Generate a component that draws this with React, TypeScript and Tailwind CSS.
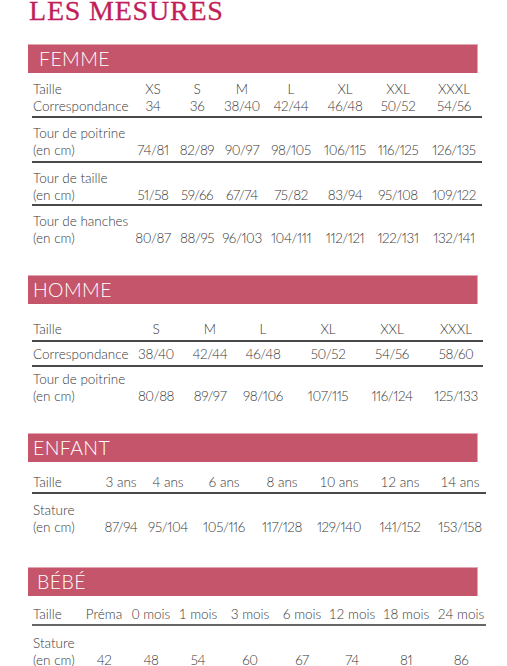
import React from "react";

const txt = "text-[13.5px] leading-[17px] text-[#383838] font-light";

function Bar({ label, pl }: { label: string; pl: string }) {
  return (
    <div
      className={`h-[29px] w-[450px] bg-[#c4556b] border-t border-r border-[#e3a7b3] flex items-center ${pl}`}
    >
      <span
        className="text-white text-[19.5px] leading-none font-light tracking-[0.4px]"
        style={{ fontFamily: "Lato, 'Open Sans', sans-serif" }}
      >
        {label}
      </span>
    </div>
  );
}

function Row({
  cols,
  label,
  values,
  cls,
}: {
  cols: string;
  label: React.ReactNode;
  values: string[];
  cls: string;
}) {
  return (
    <div className={`grid items-end ${cols} ${cls}`}>
      <div className="pl-[1px] whitespace-nowrap">{label}</div>
      {values.map((v, i) => (
        <div
          key={i}
          className={`flex justify-center whitespace-nowrap ${
            /^[0-9/]+$/.test(v) ? "proportional-nums tracking-[-0.4px]" : ""
          }`}
        >
          {v}
        </div>
      ))}
    </div>
  );
}

const two = (a: string) => (
  <>
    {a}
    <br />
    (en cm)
  </>
);

export default function App() {
  const F = "grid-cols-[102px_38px_50px_40px_58px_50px_56px_56px] w-[450px]";
  const H = "grid-cols-[85px_78px_30px_76px_54px_74px_54px] w-[451px]";
  const E = "grid-cols-[70px_38px_56px_56px_60px_54px_68px_52px] w-[454px]";
  const B = "grid-cols-[46px_52px_42px_52px_52px_52px_48px_60px_50px] w-[454px]";
  const line = "border-b-2 border-[#4a4a4a]";
  return (
    <div
      className="w-[507px] h-[666px] bg-white overflow-hidden pl-[28px]"
      style={{ fontFamily: "Lato, 'Open Sans', sans-serif" }}
    >
      <div className="h-[22px]">
        <h1
          className="relative -top-[4px] text-[28px] leading-[30px] text-[#c11d5a] tracking-[0.8px] pl-[1px] [-webkit-text-stroke:0.3px_#c11d5a]"
          style={{ fontFamily: "'Liberation Serif', serif" }}
        >
          LES MESURES
        </h1>
      </div>

      {/* FEMME */}
      <div className="mt-[22px]">
        <Bar label="FEMME" pl="pl-[11px]" />
      </div>
      <div className={`ml-[4px] ${txt}`}>
        <div className={`mt-[8px] pb-[1px] ${line} w-[450px]`}>
          <Row cols={F} cls="" label="Taille" values={["XS", "S", "M", "L", "XL", "XXL", "XXXL"]} />
          <Row cols={F} cls="" label="Correspondance" values={["34", "36", "38/40", "42/44", "46/48", "50/52", "54/56"]} />
        </div>
        <Row
          cols={F}
          cls={`pt-[7px] pb-[2px] ${line}`}
          label={two("Tour de poitrine")}
          values={["74/81", "82/89", "90/97", "98/105", "106/115", "116/125", "126/135"]}
        />
        <Row
          cols={F}
          cls={`pt-[7px] ${line}`}
          label={two("Tour de taille")}
          values={["51/58", "59/66", "67/74", "75/82", "83/94", "95/108", "109/122"]}
        />
        <Row
          cols={F}
          cls="pt-[7px]"
          label={two("Tour de hanches")}
          values={["80/87", "88/95", "96/103", "104/111", "112/121", "122/131", "132/141"]}
        />
      </div>

      {/* HOMME */}
      <div className="mt-[28px]">
        <Bar label="HOMME" pl="pl-[5px]" />
      </div>
      <div className={`ml-[4px] ${txt}`}>
        <Row
          cols={H}
          cls={`mt-[17px] pb-[2px] ${line}`}
          label="Taille"
          values={["S", "M", "L", "XL", "XXL", "XXXL"]}
        />
        <Row
          cols={H}
          cls={`pt-[4px] pb-[2px] ${line}`}
          label="Correspondance"
          values={["38/40", "42/44", "46/48", "50/52", "54/56", "58/60"]}
        />
        <Row
          cols={H}
          cls="pt-[4px]"
          label={two("Tour de poitrine")}
          values={["80/88", "89/97", "98/106", "107/115", "116/124", "125/133"]}
        />
      </div>

      {/* ENFANT */}
      <div className="mt-[28px]">
        <Bar label="ENFANT" pl="pl-[5px]" />
      </div>
      <div className={`ml-[4px] ${txt}`}>
        <Row
          cols={E}
          cls={`mt-[12px] pb-[1px] ${line}`}
          label="Taille"
          values={["3 ans", "4 ans", "6 ans", "8 ans", "10 ans", "12 ans", "14 ans"]}
        />
        <Row
          cols={E}
          cls="pt-[8px]"
          label={
            <>
              Stature
              <br />
              (en cm)
            </>
          }
          values={["87/94", "95/104", "105/116", "117/128", "129/140", "141/152", "153/158"]}
        />
      </div>

      {/* BEBE */}
      <div className="mt-[31px]">
        <Bar label="BÉBÉ" pl="pl-[9px]" />
      </div>
      <div className={`ml-[4px] ${txt}`}>
        <Row
          cols={B}
          cls={`mt-[10px] pb-[1px] border-b-2 border-[#666666]`}
          label="Taille"
          values={["Préma", "0 mois", "1 mois", "3 mois", "6 mois", "12 mois", "18 mois", "24 mois"]}
        />
        <Row
          cols={B}
          cls="pt-[9px]"
          label={
            <>
              Stature
              <br />
              (en cm)
            </>
          }
          values={["42", "48", "54", "60", "67", "74", "81", "86"]}
        />
      </div>
    </div>
  );
}
